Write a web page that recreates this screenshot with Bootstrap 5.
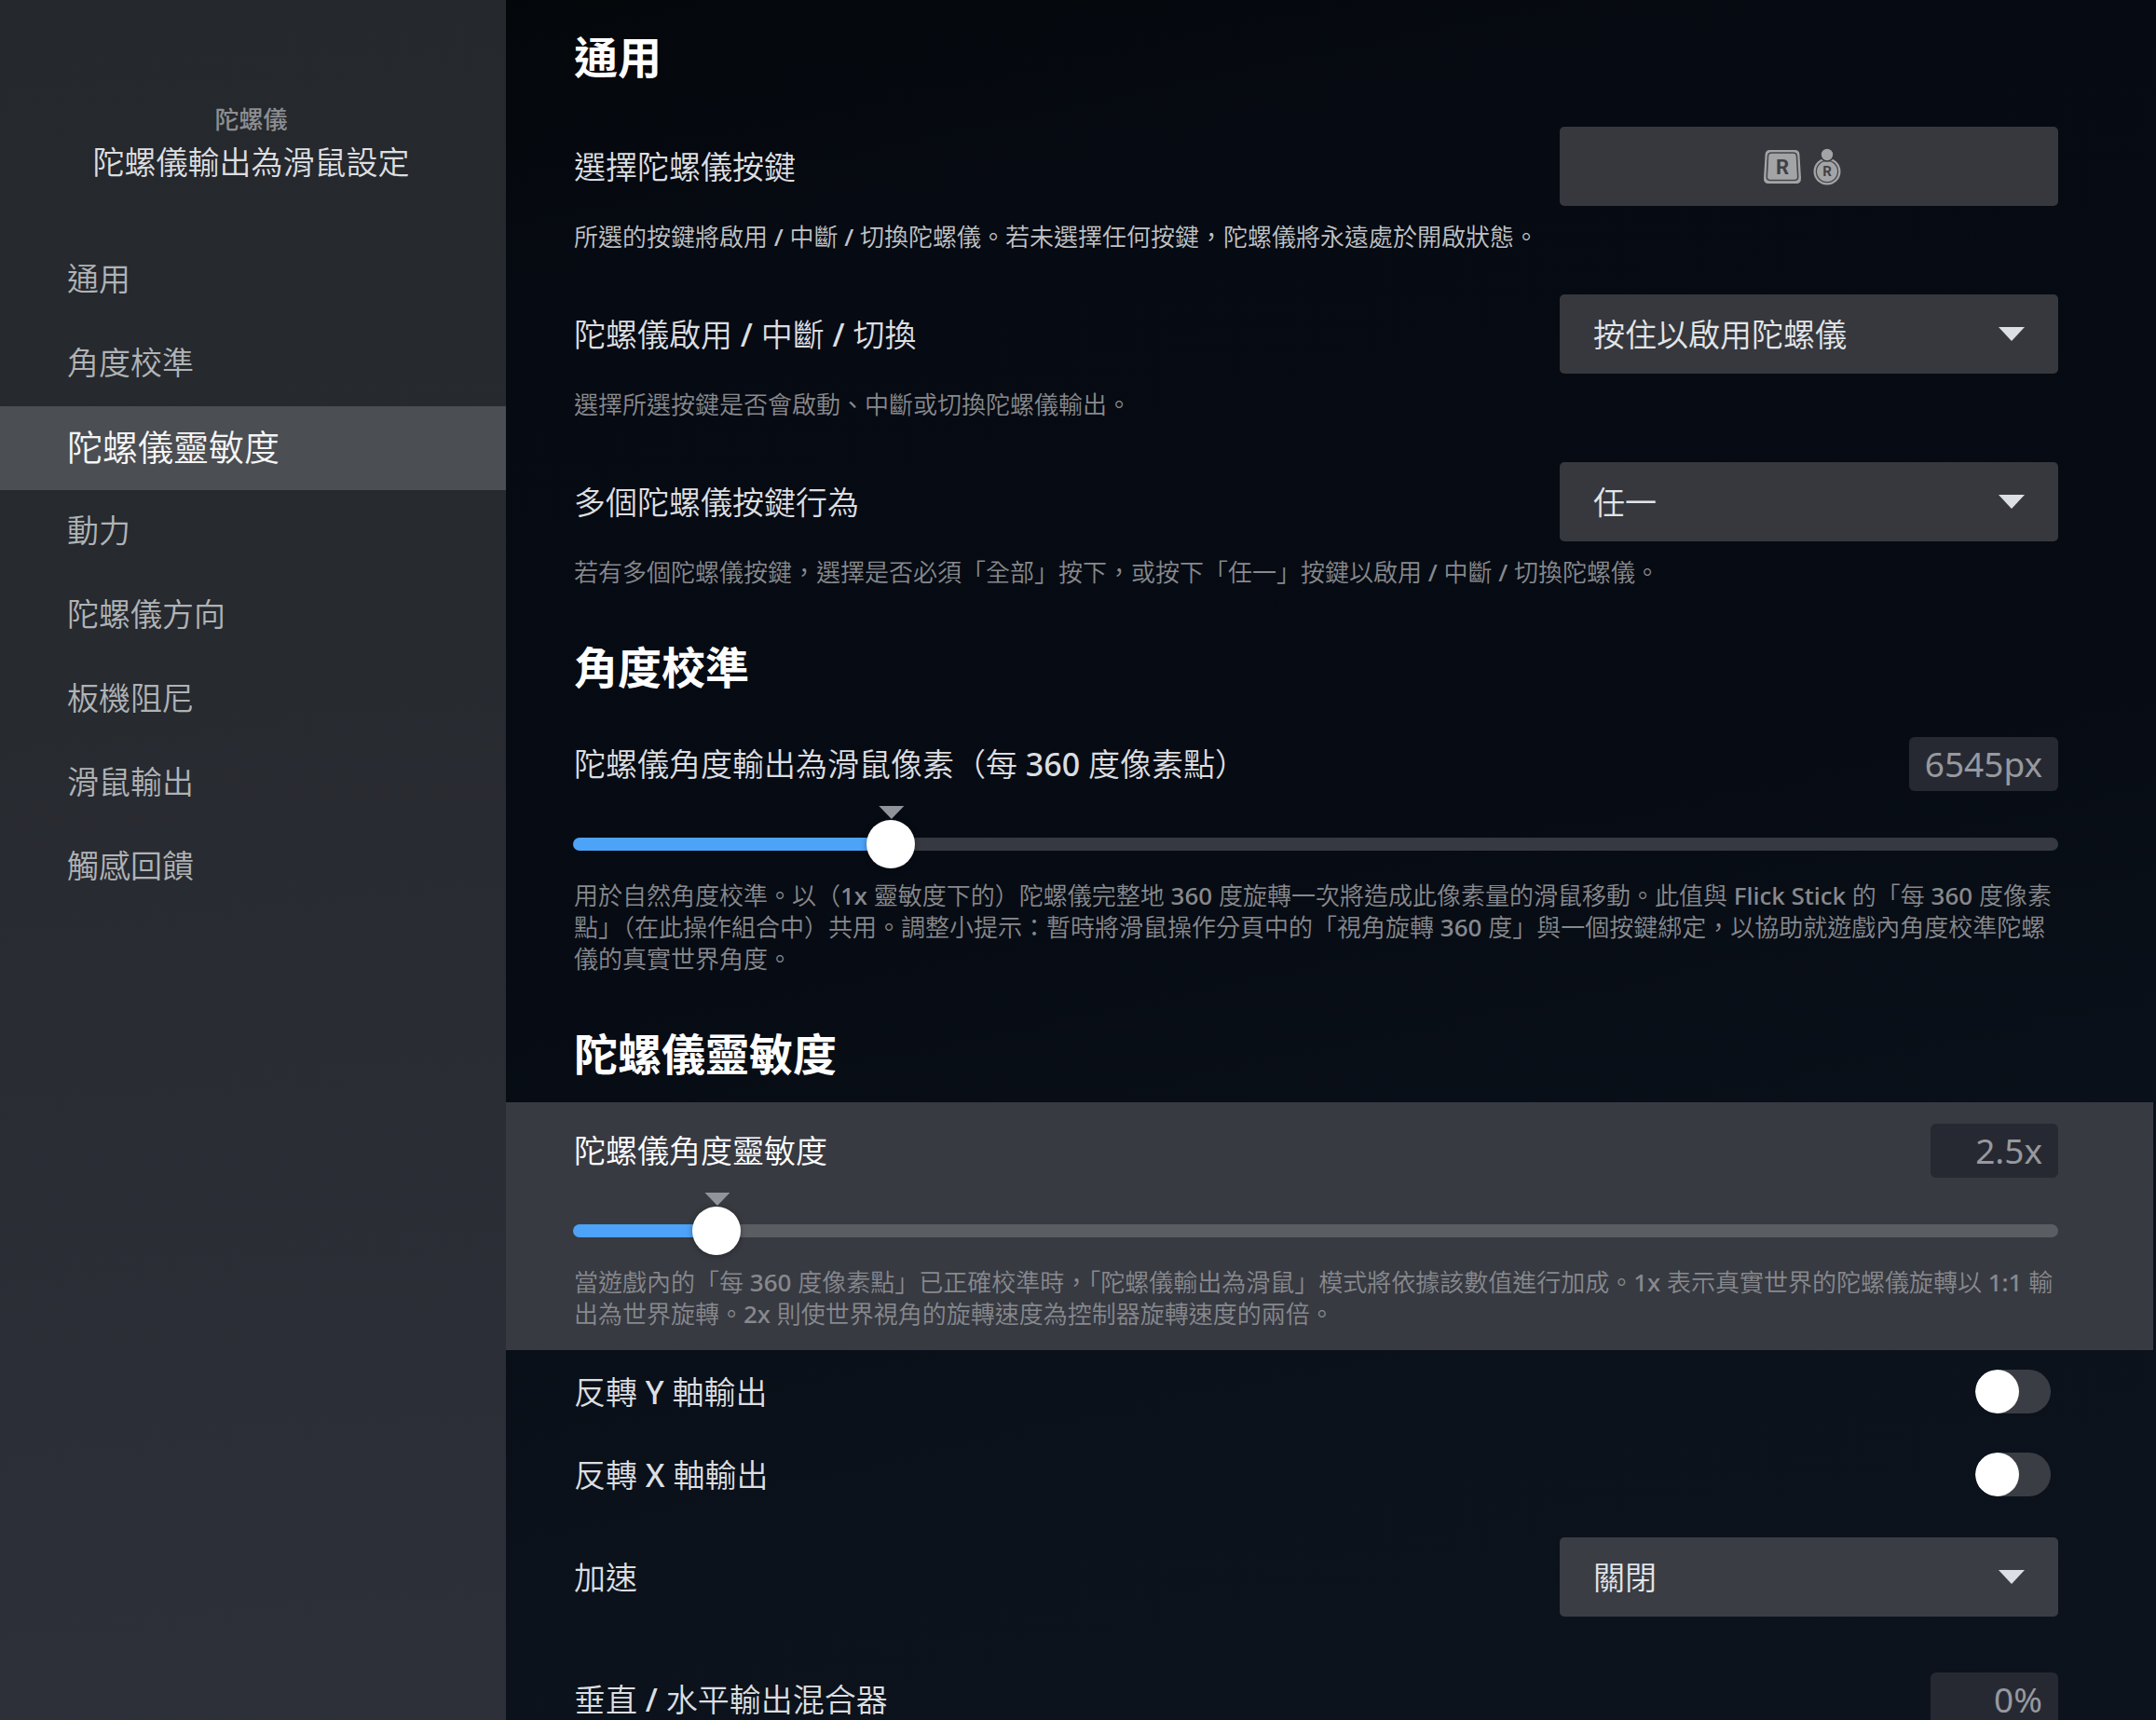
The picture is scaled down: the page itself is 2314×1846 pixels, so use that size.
<!DOCTYPE html>
<html lang="zh-Hant-TW" data-bs-theme="dark">
<head>
<meta charset="utf-8">
<meta name="viewport" content="width=device-width, initial-scale=1">
<title>陀螺儀輸出為滑鼠設定</title>
<link href="https://cdn.jsdelivr.net/npm/bootstrap@5.3.0/dist/css/bootstrap.min.css" rel="stylesheet">
<style>
  :root {
    --label: #dcdee0;
    --muted: #87898d;
    --accent: #4da3f7;
  }
  body {
    font-family: "Noto Sans", "Noto Sans CJK TC DemiLight", "Noto Sans CJK TC", sans-serif;
    font-size: 34px;
    font-weight: 500;
    line-height: 46px;
    color: var(--label);
    background: #080c14;
  }
  .side-panel {
    width: 543px;
    background: linear-gradient(175deg, #25282c 0%, #272a2f 40%, #2a2c34 60%, #2d3039 100%);
  }
  .side-head { padding: 111px 0 53px; }
  .side-kicker, .group-title { font-family: "Noto Sans", "Noto Sans CJK TC", sans-serif; }
  .side-kicker { font-size: 26px; line-height: 34px; color: #8b8e93; padding-right: 4px; }
  .side-title { font-size: 34px; line-height: 58px; padding-right: 4px; }
  .side-nav .nav-link {
    padding: 20px 72px 24px;
    line-height: 46px;
    color: #b0b3b6;
    border-radius: 0;
  }
  .side-nav .nav-link.active {
    background: #4b4e52;
    color: #f4f5f6;
    font-size: 38px;
  }
  .settings {
    background: linear-gradient(168deg, #04070a 0%, #060a12 14%, #070c14 50%, #0b121b 78%, #0d131d 100%);
    padding-right: 3px;
  }
  .group-title {
    margin: 0;
    padding: 38px 102px 27px 73px;
    font-size: 47px;
    line-height: 50px;
    font-weight: 700;
    color: #fff;
  }
  .group-title.at-top { padding-top: 36px; }
  .setting { padding: 23px 102px 22px 72px; }
  .setting.has-focus { background: #383a42; }
  .setting.has-focus .setting-name { color: #fff; }
  .setting.is-toggle { padding: 21px 110px 21px 72px; }
  .setting.no-note { padding-bottom: 37px; }
  .control-row { margin-bottom: 16px; }
  .setting-name { padding-left: 1px; line-height: 40px; }
  .note {
    margin: 0;
    padding-left: 1px;
    font-size: 26px;
    line-height: 34px;
    color: var(--muted);
  }
  .note.bright { color: #c0c3c6; }
  .pick {
    width: 535px;
    height: 85px;
    flex: none;
    border: 0;
    border-radius: 5px;
    font-size: 34px;
    font-weight: 500;
    line-height: 46px;
    color: #e2e5e8;
    background-color: #36383d;
  }
  .pick.form-select {
    padding: 0 80px 0 36px;
    background-image: url("data:image/svg+xml,%3Csvg xmlns='http://www.w3.org/2000/svg' viewBox='0 0 28 15'%3E%3Cpath d='M0 0h28L14 15z' fill='%23dcdfe4'/%3E%3C/svg%3E");
    background-size: 28px 15px;
    background-position: right 36px center;
  }
  .pick.tinted { background-color: #3b3d45; }
  .pick svg { margin-right: 12px; }
  .pick.btn { padding-right: 16px; }
  .reading {
    min-width: 137px;
    height: 58px;
    padding: 9px 17px;
    text-align: right;
    font-size: 37px;
    font-weight: 400;
    line-height: 40px;
    color: #96999f;
    background: #272932;
    border-radius: 6px;
  }
  .slide-wrap { margin: 31px 0 12px; height: 52px; }
  .slide-wrap .form-range {
    display: block;
    height: 52px;
    --stop: calc(26px + var(--at) * (100% - 52px));
    --rail: #363941;
  }
  .has-focus .form-range { --rail: #5a5d62; }
  .form-range::-webkit-slider-runnable-track {
    height: 14px;
    border-radius: 7px;
    background: linear-gradient(to right, var(--accent) var(--stop), var(--rail) var(--stop));
  }
  .form-range::-webkit-slider-thumb {
    width: 52px;
    height: 52px;
    margin-top: -19px;
    border-radius: 50%;
    background: #fff;
    box-shadow: 0 1px 6px rgba(0, 0, 0, .35);
  }
  .default-mark {
    position: absolute;
    top: -15px;
    left: calc(26px + var(--at) * (100% - 52px));
    width: 27px;
    height: 14px;
    margin-left: -13px;
    background: #91959b;
    clip-path: polygon(0 0, 100% 0, 50% 100%);
  }
  .flip.form-check-input {
    width: 81px;
    height: 47px;
    margin: 0;
    flex: none;
    border: 0;
    border-radius: 24px;
    background-color: #3b3d44;
    background-image: url("data:image/svg+xml,%3Csvg xmlns='http://www.w3.org/2000/svg' viewBox='0 0 8 8'%3E%3Ccircle cx='4' cy='4' r='4' fill='%23fff'/%3E%3C/svg%3E");
    background-size: 47px 47px;
    background-position: left center;
    background-repeat: no-repeat;
  }
</style>
</head>
<body>
<div class="d-flex vh-100 overflow-hidden">
  <aside class="side-panel flex-shrink-0">
    <header class="side-head text-center">
      <div class="side-kicker">陀螺儀</div>
      <div class="side-title">陀螺儀輸出為滑鼠設定</div>
    </header>
    <nav class="side-nav nav flex-column">
      <a class="nav-link" href="#general">通用</a>
      <a class="nav-link" href="#calibration">角度校準</a>
      <a class="nav-link active" aria-current="true" href="#sensitivity">陀螺儀靈敏度</a>
      <a class="nav-link" href="#momentum">動力</a>
      <a class="nav-link" href="#orientation">陀螺儀方向</a>
      <a class="nav-link" href="#dampening">板機阻尼</a>
      <a class="nav-link" href="#mouse">滑鼠輸出</a>
      <a class="nav-link" href="#haptics">觸感回饋</a>
    </nav>
  </aside>

  <main class="settings flex-grow-1 overflow-hidden">
    <section id="general">
      <h2 class="group-title at-top">通用</h2>

      <div class="setting">
        <div class="control-row d-flex justify-content-between align-items-center">
          <span class="setting-name" id="gyroButtonsName">選擇陀螺儀按鍵</span>
          <button type="button" class="pick btn d-flex justify-content-center align-items-center" aria-labelledby="gyroButtonsName">
            <svg width="42" height="38" viewBox="0 0 42 38" aria-hidden="true">
              <path d="M7.500 1h27q4.500 0 4.900 4.500l1.600 25.500q.2 6-5 6H6q-5.200 0-5-6l1.600-25.500q.4-4.500 4.900-4.500z" fill="#a3a4a6"/>
              <path d="M9.500 4h23q3.800 0 4 3.500l1.200 22q.1 4-3.700 4H8q-3.800 0-3.700-4l1.200-22Q5.700 4 9.500 4z" fill="#a3a4a6" stroke="#45474b" stroke-width="1.600"/>
              <text x="21" y="27" text-anchor="middle" font-family="Roboto, sans-serif" font-weight="700" font-size="22" fill="#3f4145">R</text>
            </svg>
            <svg width="30" height="40" viewBox="0 0 30 40" aria-hidden="true">
              <circle cx="15" cy="25" r="14.500" fill="#a3a4a6"/>
              <circle cx="15" cy="25" r="11.600" fill="#a3a4a6" stroke="#45474b" stroke-width="1.300"/>
              <circle cx="15" cy="7" r="7" fill="#a3a4a6" stroke="#36383d" stroke-width="1.600"/>
              <text x="15" y="30" text-anchor="middle" font-family="Roboto, sans-serif" font-weight="700" font-size="15" fill="#3f4145">R</text>
            </svg>
          </button>
        </div>
        <p class="note bright">所選的按鍵將啟用 / 中斷 / 切換陀螺儀。若未選擇任何按鍵，陀螺儀將永遠處於開啟狀態。</p>
      </div>

      <div class="setting">
        <div class="control-row d-flex justify-content-between align-items-center">
          <label class="setting-name" for="gyroMode">陀螺儀啟用 / 中斷 / 切換</label>
          <select class="pick form-select" id="gyroMode"><option>按住以啟用陀螺儀</option></select>
        </div>
        <p class="note">選擇所選按鍵是否會啟動、中斷或切換陀螺儀輸出。</p>
      </div>

      <div class="setting">
        <div class="control-row d-flex justify-content-between align-items-center">
          <label class="setting-name" for="multiButton">多個陀螺儀按鍵行為</label>
          <select class="pick form-select" id="multiButton"><option>任一</option></select>
        </div>
        <p class="note">若有多個陀螺儀按鍵，選擇是否必須「全部」按下，或按下「任一」按鍵以啟用 / 中斷 / 切換陀螺儀。</p>
      </div>
    </section>

    <section id="calibration">
      <h2 class="group-title">角度校準</h2>

      <div class="setting">
        <div class="d-flex justify-content-between align-items-center">
          <label class="setting-name" for="pixels">陀螺儀角度輸出為滑鼠像素（每 360 度像素點）</label>
          <output class="reading" for="pixels">6545px</output>
        </div>
        <div class="slide-wrap position-relative" style="--at: .2045">
          <span class="default-mark"></span>
          <input type="range" class="form-range" id="pixels" min="0" max="32000" value="6545">
        </div>
        <p class="note">用於自然角度校準。以（1x 靈敏度下的）陀螺儀完整地 360 度旋轉一次將造成此像素量的滑鼠移動。此值與 Flick Stick 的「每 360 度像素點」（在此操作組合中）共用。調整小提示：暫時將滑鼠操作分頁中的「視角旋轉 360 度」與一個按鍵綁定，以協助就遊戲內角度校準陀螺儀的真實世界角度。</p>
      </div>
    </section>

    <section id="sensitivity">
      <h2 class="group-title">陀螺儀靈敏度</h2>

      <div class="setting has-focus">
        <div class="d-flex justify-content-between align-items-center">
          <label class="setting-name" for="angleSens">陀螺儀角度靈敏度</label>
          <output class="reading" for="angleSens">2.5x</output>
        </div>
        <div class="slide-wrap position-relative" style="--at: .0833">
          <span class="default-mark"></span>
          <input type="range" class="form-range" id="angleSens" min="0" max="30" step="0.1" value="2.5">
        </div>
        <p class="note">當遊戲內的「每 360 度像素點」已正確校準時，「陀螺儀輸出為滑鼠」模式將依據該數值進行加成。1x 表示真實世界的陀螺儀旋轉以 1:1 輸出為世界旋轉。2x 則使世界視角的旋轉速度為控制器旋轉速度的兩倍。</p>
      </div>

      <div class="setting is-toggle d-flex justify-content-between align-items-center">
        <label class="setting-name" for="invertY">反轉 Y 軸輸出</label>
        <input class="flip form-check-input" type="checkbox" role="switch" id="invertY">
      </div>
      <div class="setting is-toggle d-flex justify-content-between align-items-center">
        <label class="setting-name" for="invertX">反轉 X 軸輸出</label>
        <input class="flip form-check-input" type="checkbox" role="switch" id="invertX">
      </div>

      <div class="setting no-note">
        <div class="d-flex justify-content-between align-items-center">
          <label class="setting-name" for="accel">加速</label>
          <select class="pick tinted form-select" id="accel"><option>關閉</option></select>
        </div>
      </div>

      <div class="setting">
        <div class="d-flex justify-content-between align-items-center">
          <span class="setting-name">垂直 / 水平輸出混合器</span>
          <output class="reading">0%</output>
        </div>
      </div>
    </section>
  </main>
</div>
<script src="https://cdn.jsdelivr.net/npm/bootstrap@5.3.0/dist/js/bootstrap.bundle.min.js"></script>
</body>
</html>
